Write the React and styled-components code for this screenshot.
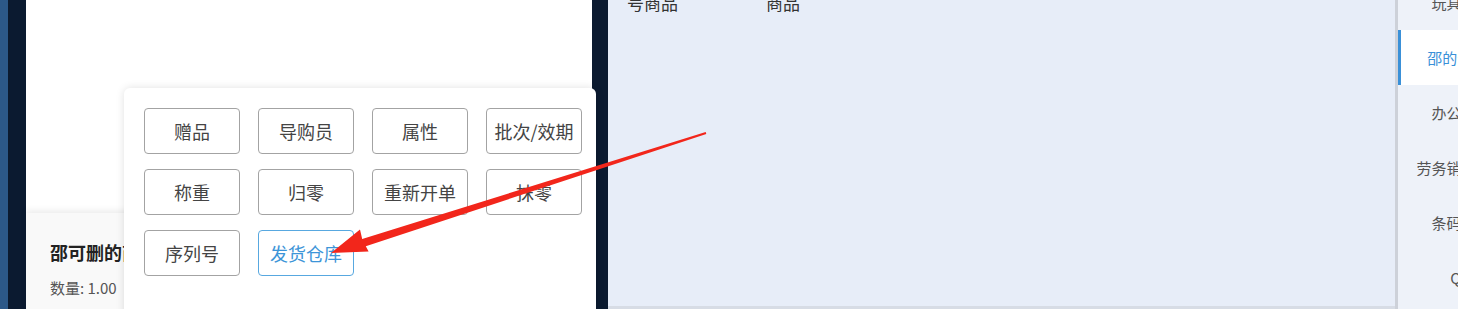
import React from 'react';
import styled, { createGlobalStyle } from 'styled-components';

const GlobalStyle = createGlobalStyle`
  html, body {
    margin: 0;
    padding: 0;
    overflow: hidden;
    font-family: "Noto Sans CJK SC", "Noto Sans", sans-serif;
  }
`;

const Page = styled.div`
  position: relative;
  display: flex;
  width: 1522px;
  height: 309px;
  background: #0b1a30;
`;

const EdgeStrip = styled.div`
  width: 8px;
  flex-shrink: 0;
  background: #2c5888;
`;

const Gutter = styled.div`
  width: ${(p) => p.w}px;
  flex-shrink: 0;
  background: #0b1a30;
`;

const CartPanel = styled.div`
  position: relative;
  width: 566px;
  flex-shrink: 0;
  background: #ffffff;
  display: flex;
  flex-direction: column;
  justify-content: flex-end;
`;

const ItemCard = styled.div`
  height: 96px;
  background: #f9f9f9;
  box-shadow: 0 -3px 6px rgba(0, 0, 0, 0.07);
  padding: 26px 24px 0;
  box-sizing: border-box;
`;

const ItemName = styled.div`
  font-size: 18px;
  font-weight: 700;
  color: #222;
  line-height: 26px;
`;

const ItemQty = styled.div`
  margin-top: 12px;
  font-size: 15px;
  color: #555;
  line-height: 22px;
`;

const GoodsPanel = styled.div`
  width: 787px;
  flex-shrink: 0;
  background: #e7edf8;
  border-bottom: 3px solid #d7dce5;
  box-sizing: border-box;
`;

const TabRow = styled.div`
  display: flex;
  gap: 88px;
  margin-top: -9px;
  padding-left: 19px;
`;

const TabLabel = styled.div`
  font-size: 17px;
  line-height: 24px;
  color: #333;
`;

const Divider = styled.div`
  width: 3px;
  flex-shrink: 0;
  background: #cdd1d9;
`;

const Sidebar = styled.div`
  width: 124px;
  flex-shrink: 0;
  background: #eef2f9;
`;

const SideList = styled.div`
  margin-top: -25px;
  display: flex;
  flex-direction: column;
`;

const SideItem = styled.div`
  height: 55px;
  display: flex;
  align-items: center;
  justify-content: center;
  font-size: 15px;
  color: ${(p) => (p.active ? '#3a90d8' : '#555')};
  background: ${(p) => (p.active ? '#ffffff' : 'transparent')};
  border-left: 3px solid ${(p) => (p.active ? '#3a90d8' : 'transparent')};
  white-space: nowrap;
`;

const Popover = styled.div`
  position: absolute;
  left: 98px;
  top: 88px;
  width: 472px;
  height: 240px;
  box-sizing: border-box;
  padding: 20px 14px 20px 20px;
  background: #ffffff;
  border-radius: 6px;
  box-shadow: 0 0 8px rgba(0, 0, 0, 0.12);
  display: grid;
  grid-template-columns: repeat(4, 96px);
  grid-auto-rows: 46px;
  column-gap: 18px;
  row-gap: 15px;
  align-content: start;
  z-index: 2;
`;

const OptionButton = styled.div`
  box-sizing: border-box;
  border: 1px solid ${(p) => (p.active ? '#58a8e0' : '#a3a3a3')};
  border-radius: 4px;
  display: flex;
  align-items: center;
  justify-content: center;
  font-size: 18px;
  color: ${(p) => (p.active ? '#3d95d8' : '#444')};
  white-space: nowrap;
  background: #fff;
`;

const ArrowLayer = styled.svg`
  position: absolute;
  left: 0;
  top: 0;
  width: 1458px;
  height: 309px;
  pointer-events: none;
  z-index: 5;
`;

const options = [
  '赠品', '导购员', '属性', '批次/效期',
  '称重', '归零', '重新开单', '抹零',
  '序列号', '发货仓库',
];

const sideItems = ['玩具用品', '邵的分类1', '办公用品', '劳务销售费用', '条码商品', 'QQ'];

const App = () => {
  return (
    <>
      <GlobalStyle />
      <Page>
        <EdgeStrip />
        <Gutter w={18} />
        <CartPanel>
          <ItemCard>
            <ItemName>邵可删的商品</ItemName>
            <ItemQty>数量:&nbsp;1.00</ItemQty>
          </ItemCard>
          <Popover>
            {options.map((o) => (
              <OptionButton key={o} active={o === '发货仓库'}>{o}</OptionButton>
            ))}
          </Popover>
        </CartPanel>
        <Gutter w={16} />
        <GoodsPanel>
          <TabRow>
            <TabLabel>号商品</TabLabel>
            <TabLabel>商品</TabLabel>
          </TabRow>
        </GoodsPanel>
        <Divider />
        <Sidebar>
          <SideList>
            {sideItems.map((s, i) => (
              <SideItem key={s} active={i === 1}>{s}</SideItem>
            ))}
          </SideList>
        </Sidebar>

        {/* red annotation arrow */}
        <ArrowLayer viewBox="0 0 1458 309">
          <polygon
            fill="#f2261b"
            points="706.3,134 705.7,132 362.2,239 360,229.4 331,253 368.6,251.4 365.8,246.2"
          />
        </ArrowLayer>
      </Page>
    </>
  );
};

export default App;
